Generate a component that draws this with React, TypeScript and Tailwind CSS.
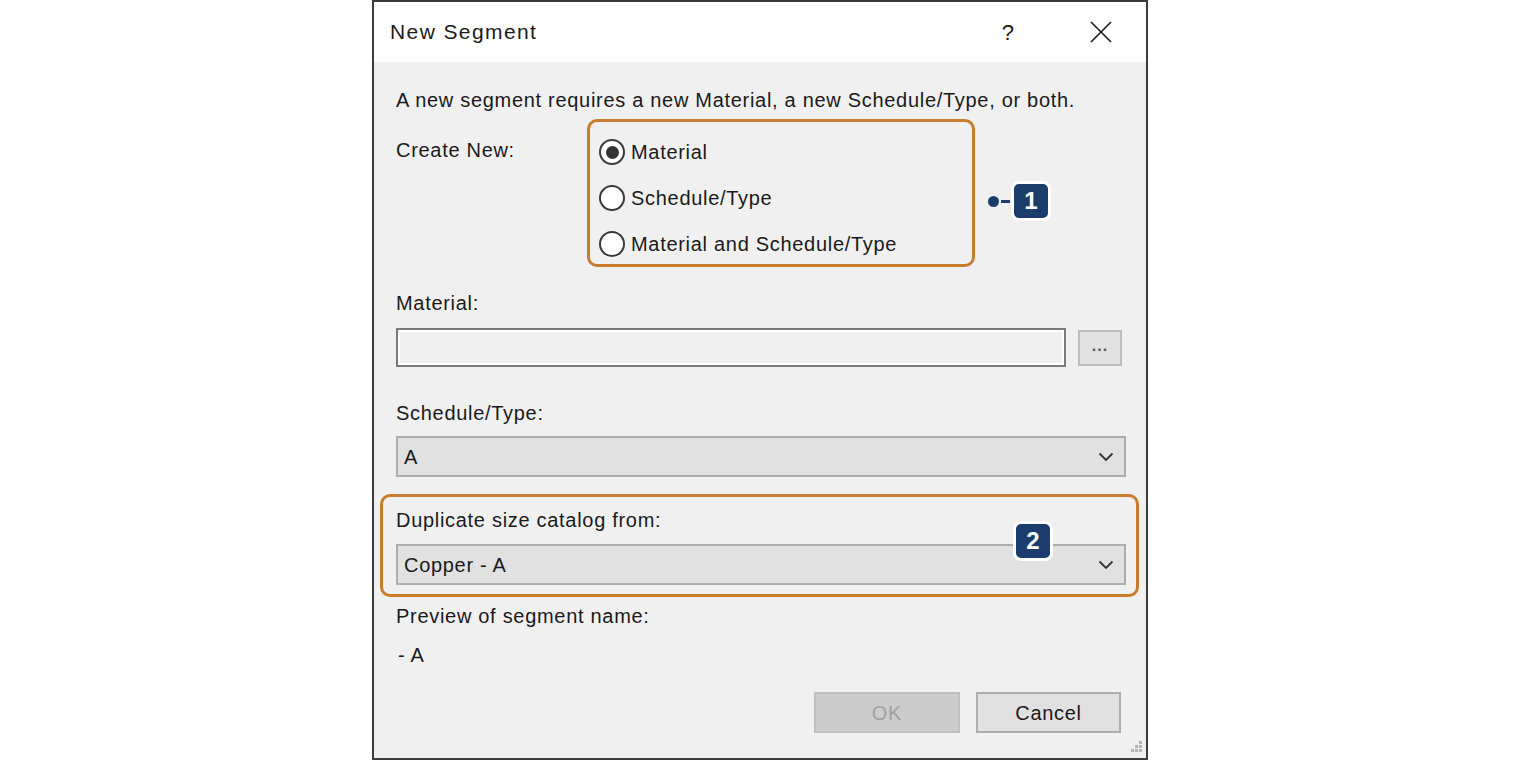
import React from "react";

const font = { fontFamily: '"Liberation Sans", Arial, sans-serif' };

function Radio({ checked, label }: { checked?: boolean; label: string }) {
  return (
    <div className="flex h-[30px] items-center">
      <span className="ml-[9px] flex h-[26px] w-[26px] items-center justify-center rounded-full border-2 border-[#3a3a3a] bg-white">
        {checked && <span className="h-[13px] w-[13px] rounded-full bg-[#333333]" />}
      </span>
      <span className="ml-[6px] text-[#1a1a1a]">{label}</span>
    </div>
  );
}

function Chevron() {
  return (
    <svg width="16" height="10" viewBox="0 0 16 10" className="mr-[10px]">
      <path d="M1.5 1.5 L8 8 L14.5 1.5" fill="none" stroke="#333" strokeWidth="1.8" />
    </svg>
  );
}

function Combo({ value }: { value: string }) {
  return (
    <div className="flex h-[41px] w-[730px] items-center justify-between border-2 border-[#adadad] bg-[#e1e1e1]">
      <span className="pl-[6px] text-[#1a1a1a]">{value}</span>
      <Chevron />
    </div>
  );
}

function Badge({ n }: { n: string }) {
  return (
    <div className="flex h-[40px] w-[40px] items-center justify-center rounded-[8px] border-[3px] border-white bg-[#1b3d6c] text-[24px] font-bold tracking-normal text-white">
      {n}
    </div>
  );
}

export default function App() {
  return (
    <div className="min-h-[760px] w-full bg-white" style={font}>
      <div className="mx-auto flex h-[760px] w-[776px] flex-col border-2 border-[#3c3c3c] bg-[#f0f0f0]">
        {/* title bar */}
        <div className="flex h-[60px] shrink-0 items-center bg-white pl-[16px]">
          <span className="text-[21px] tracking-[1.4px] text-[#1a1a1a]">New Segment</span>
          <span className="ml-auto mr-[76px] text-[22px] text-[#1a1a1a]">?</span>
          <svg width="22" height="22" viewBox="0 0 22 22" className="mr-[34px]">
            <path d="M1 1 L21 21 M21 1 L1 21" stroke="#1a1a1a" strokeWidth="1.6" />
          </svg>
        </div>

        <div className="relative flex-1 pl-[22px] pr-[20px] text-[20px] leading-[24px] tracking-[0.7px] text-[#1a1a1a]">
          <div className="mt-[26px] h-[24px]">
            A new segment requires a new Material, a new Schedule/Type, or both.
          </div>

          {/* create new */}
          <div className="mt-[7px] flex">
            <div className="mt-[19px] w-[191px]">Create New:</div>
            <div className="relative h-[148px] w-[388px] rounded-[10px] border-[3px] border-[#c97d2c] pt-[15px]">
              <div className="flex flex-col gap-[16px]">
                <Radio checked label="Material" />
                <Radio label="Schedule/Type" />
                <Radio label="Material and Schedule/Type" />
              </div>
              <div className="absolute left-[398px] top-[59px] flex items-center">
                <span className="h-[11px] w-[11px] rounded-full bg-[#1b3d6c]" />
                <span className="ml-[2px] h-[3px] w-[9px] bg-[#1b3d6c]" />
                <span className="ml-[1px]">
                  <Badge n="1" />
                </span>
              </div>
            </div>
          </div>

          <div className="mt-[24px] h-[24px]">Material:</div>
          <div className="mt-[13px] flex items-center">
            <div className="h-[39px] w-[670px] border-2 border-[#7a7a7a] bg-[#f0f0f0] shadow-[inset_0_0_0_2px_#ffffff]" />
            <div className="ml-[12px] flex h-[36px] w-[44px] items-center justify-center border-2 border-[#bdbdbd] bg-[#e1e1e1] pb-[4px] text-[16px] font-bold tracking-[1px] text-[#555]">
              ...
            </div>
          </div>

          <div className="mt-[34px] h-[24px]">Schedule/Type:</div>
          <div className="mt-[11px]">
            <Combo value="A" />
          </div>

          {/* duplicate */}
          <div className="relative ml-[-16px] mt-[17px] h-[103px] w-[759px] rounded-[10px] border-[3px] border-[#c97d2c] pl-[13px] pt-[11px]">
            <div className="h-[24px]">Duplicate size catalog from:</div>
            <div className="mt-[12px]">
              <Combo value="Copper - A" />
            </div>
            <div className="absolute left-[630px] top-[24px]">
              <Badge n="2" />
            </div>
          </div>

          <div className="mt-[7px] h-[24px]">Preview of segment name:</div>
          <div className="mt-[15px] h-[24px] pl-[2px]">- A</div>

          <div className="mr-[5px] mt-[25px] flex justify-end gap-[16px]">
            <div className="flex h-[41px] w-[146px] items-center justify-center border-2 border-[#bfbfbf] bg-[#cccccc] text-[#a0a0a0]">
              OK
            </div>
            <div className="flex h-[41px] w-[145px] items-center justify-center border-2 border-[#adadad] bg-[#e1e1e1]">
              Cancel
            </div>
          </div>

          {/* resize grip */}
          <svg width="16" height="16" viewBox="0 0 16 16" className="absolute bottom-[3px] right-[3px]">
            {[
              [12, 2],
              [8, 6],
              [12, 6],
              [4, 10],
              [8, 10],
              [12, 10],
            ].map(([x, y], i) => (
              <rect key={i} x={x} y={y} width="3" height="3" fill="#b5b5b5" />
            ))}
          </svg>
        </div>
      </div>
    </div>
  );
}
